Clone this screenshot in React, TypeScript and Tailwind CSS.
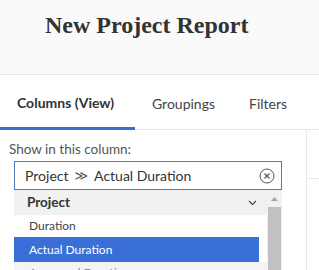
const tabs = ["Columns (View)", "Groupings", "Filters"];

export default function App() {
  return (
    <div className="w-[319px] h-[270px] overflow-hidden bg-white font-['Lato',sans-serif] text-[#333]">
      <div className="h-[75px] bg-[#fafafb] border-b border-[#e3e3e3] pl-[45px] pt-[10px]">
        <h1 className="font-['Liberation_Serif',serif] font-bold text-[24px] leading-[30px] text-[#333]">
          New Project Report
        </h1>
      </div>
      <div className="flex h-[55px] border-b border-[#e8e8e8]">
        {tabs.map((t, i) => (
          <div
            key={t}
            className={`flex items-center px-[17px] text-[14px] pt-[2px] ${i === 0 ? "w-[135px] font-bold border-b-[3px] border-[#3b6fd4] -mb-px" : "text-[#444]"}`}
          >
            {t}
          </div>
        ))}
      </div>
      <div className="flex">
        <div className="w-[307px] border-r border-[#e8e8e8] h-[140px]">
          <div className="pl-[9px] pt-[11px] text-[13.5px] leading-[16px] text-[#555]">Show in this column:</div>
          <div className="ml-[14px] mt-[4px] w-[268px]">
            <div className="h-[29px] border border-[#4f7bbf] flex items-center pl-[10px] pr-[6px] text-[14px]">
              <span>Project</span>
              <span className="mx-[6px] text-[13px] font-['DejaVu_Sans',sans-serif] text-[#555]">≫</span>
              <span>Actual Duration</span>
              <svg className="ml-auto" width="16" height="16" viewBox="0 0 16 16" fill="none" stroke="#555" strokeWidth="1">
                <circle cx="8" cy="8" r="7" />
                <path d="M5.5 5.5l5 5M10.5 5.5l-5 5" strokeWidth="1.2" />
              </svg>
            </div>
            <div className="flex">
              <div className="flex-1">
                <div className="h-[25px] bg-[#f1f1f1] flex items-center pl-[13px] pr-[10px] font-bold text-[13.5px]">
                  <span>Project</span>
                  <svg className="ml-auto" width="9" height="6" viewBox="0 0 9 6" fill="none" stroke="#444" strokeWidth="1.2">
                    <path d="M1 1l3.5 3.5L8 1" />
                  </svg>
                </div>
                <div className="h-[22px] flex items-center pl-[15px] text-[12px] text-[#444]">Duration</div>
                <div className="h-[25px] mr-[8px] bg-[#3a6fd8] flex items-center pl-[15px] text-[12px] text-white">Actual Duration</div>
                <div className="h-[22px] bg-[#f4f4f4] flex items-center pl-[15px] text-[12px] text-[#888]">Approved Duration</div>
              </div>
              <div className="w-[15px] bg-[#f1f1f1] flex flex-col items-center">
                <svg className="mt-[7px]" width="7" height="4" viewBox="0 0 7 4">
                  <path d="M0 4L3.5 0L7 4Z" fill="#a3a3a3" />
                </svg>
                <div className="mt-[6px] w-[13px] flex-1 bg-[#c1c1c1]" />
              </div>
            </div>
          </div>
        </div>
        <div className="flex-1">
          <div className="h-[49px] border-b border-[#e8e8e8]" />
        </div>
      </div>
    </div>
  );
}
